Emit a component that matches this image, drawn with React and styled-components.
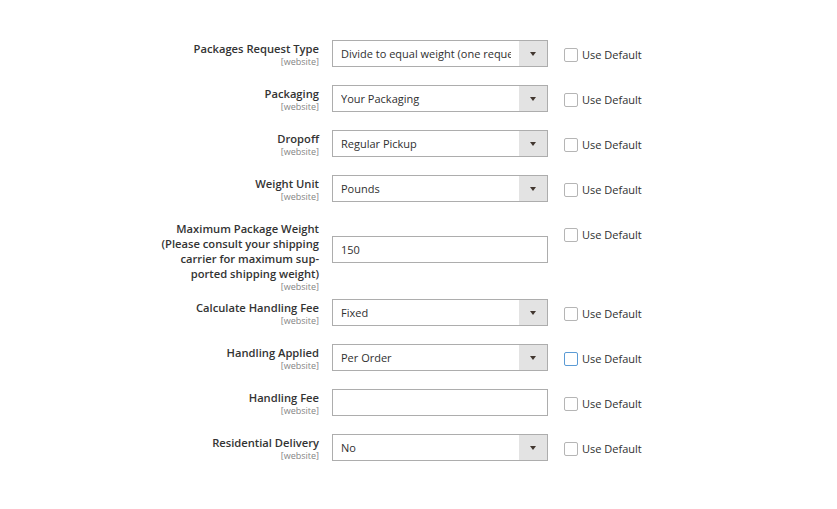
import styled, { createGlobalStyle } from "styled-components";

const Global = createGlobalStyle`
  html, body { margin:0; padding:0; background:#fff; }
  body { font-family: "Open Sans", "Liberation Sans", sans-serif; color:#303030; }
`;

const Form = styled.div`
  padding: 40px 0 0 150px;
`;

const Row = styled.div`
  display: grid;
  grid-template-columns: 169px 216px auto;
  column-gap: 13px;
  align-items: start;
  margin-bottom: ${p => p.$mb ?? 18}px;
`;

const Label = styled.div`
  text-align: right;
  padding-top: 1px;
  font-size: 11.2px;
  font-weight: 600;
  line-height: 15px;
  color: #333;
  hyphens: manual;
`;

const Scope = styled.div`
  font-size: 9px;
  font-weight: 400;
  line-height: 11px;
  color: #858585;
`;

const Control = styled.div`
  margin-top: ${p => p.$offset || 0}px;
`;

const SelectBox = styled.div`
  box-sizing: border-box;
  height: 27px;
  border: 1px solid #adadad;
  background: #fff;
  display: flex;
  align-items: stretch;
`;

const Value = styled.div`
  flex: 1;
  margin: 0 8px;
  font-size: 11px;
  line-height: 25px;
  color: #303030;
  white-space: nowrap;
  overflow: hidden;
`;

const Arrow = styled.div`
  flex: none;
  width: 28px;
  background: #e3e3e3;
  display: flex;
  align-items: center;
  justify-content: center;
  &::after {
    content: "";
    border-left: 3px solid transparent;
    border-right: 3px solid transparent;
    border-top: 4px solid #41362f;
  }
`;

const Input = styled.div`
  box-sizing: border-box;
  height: 27px;
  border: 1px solid #adadad;
  background: #fff;
  padding: 0 8px;
  font-size: 11px;
  line-height: 25px;
  color: #303030;
`;

const Default = styled.label`
  display: flex;
  align-items: center;
  gap: 4px;
  margin-top: 8px;
  margin-left: 3px;
  font-size: 11px;
  line-height: 14px;
  color: #303030;
`;

const Box = styled.span`
  box-sizing: border-box;
  width: 14px;
  height: 14px;
  border: 1px solid ${p => (p.$focus ? "#5b9bd5" : "#b5b5b5")};
  border-radius: 2px;
  background: #fff;
`;

const fields = [
  { label: "Packages Request Type", value: "Divide to equal weight (one request)" },
  { label: "Packaging", value: "Your Packaging" },
  { label: "Dropoff", value: "Regular Pickup" },
  { label: "Weight Unit", value: "Pounds" },
  {
    label: "Maximum Package Weight (Please consult your shipping carrier for maximum sup\u00adported shipping weight)",
    value: "150",
    text: true,
    offset: 16,
    mb: 7,
  },
  { label: "Calculate Handling Fee", value: "Fixed" },
  { label: "Handling Applied", value: "Per Order", focus: true },
  { label: "Handling Fee", value: "", text: true },
  { label: "Residential Delivery", value: "No" },
];

export default function App() {
  return (
    <>
      <Global />
      <Form>
        {fields.map(f => (
          <Row key={f.label} $mb={f.mb}>
            <Label>
              {f.label}
              <Scope>[website]</Scope>
            </Label>
            <Control $offset={f.offset}>
              {f.text ? (
                <Input>{f.value}</Input>
              ) : (
                <SelectBox>
                  <Value>{f.value}</Value>
                  <Arrow />
                </SelectBox>
              )}
            </Control>
            <Default>
              <Box $focus={f.focus} />
              Use Default
            </Default>
          </Row>
        ))}
      </Form>
    </>
  );
}
